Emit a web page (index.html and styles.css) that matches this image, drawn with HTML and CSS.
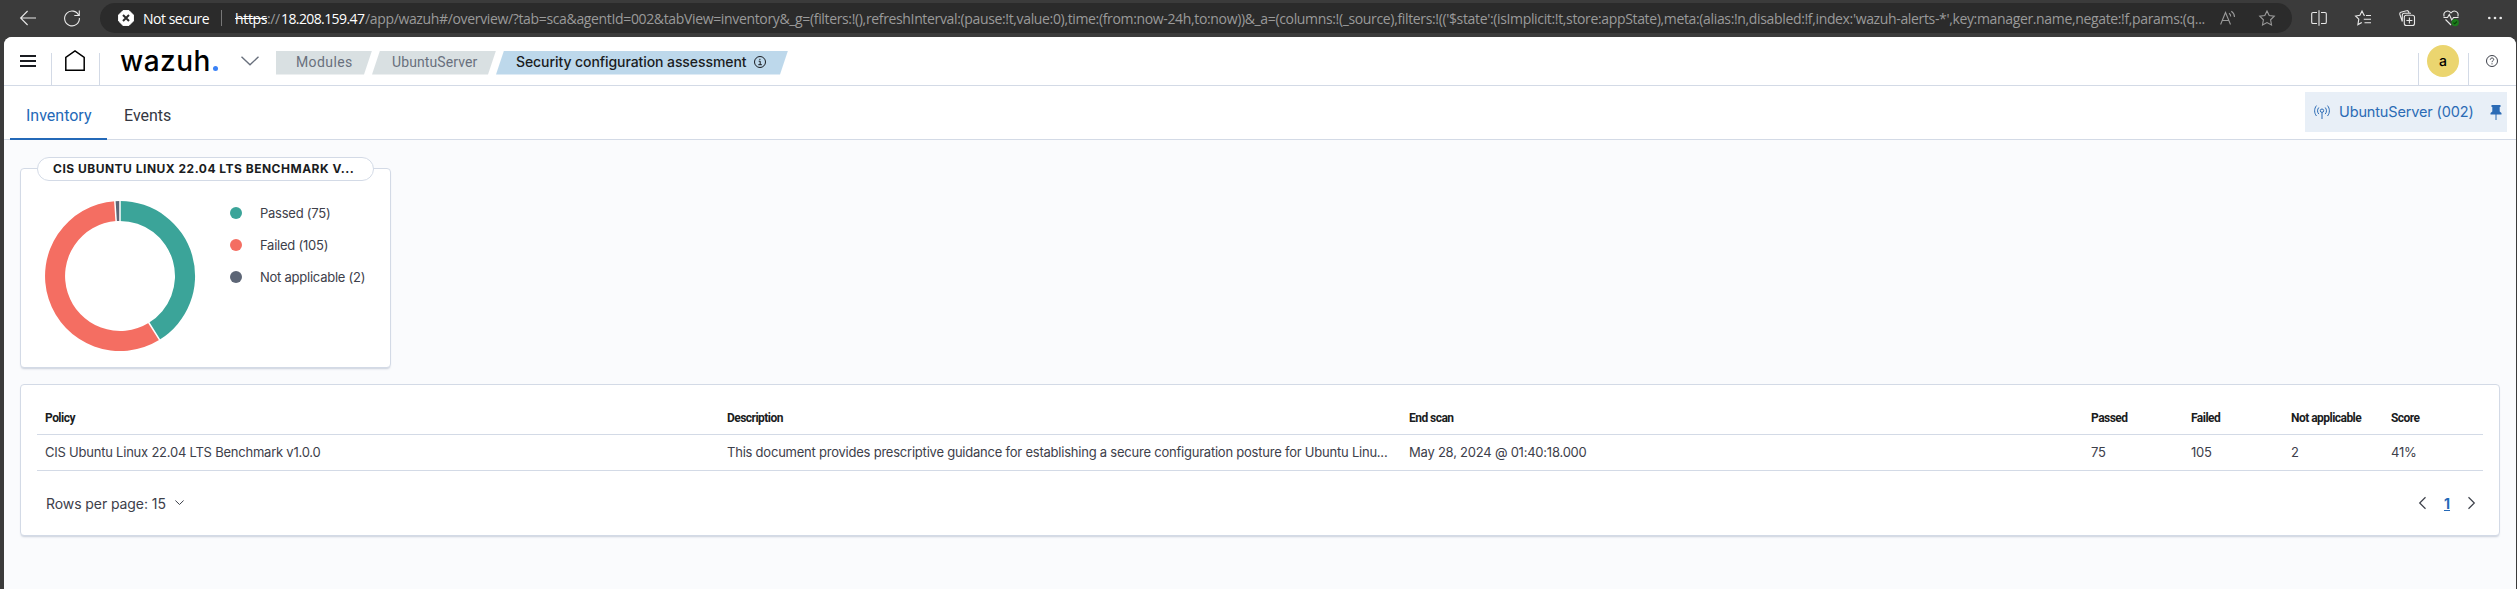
FILE: index.html
```html
<!DOCTYPE html>
<html lang="en">
<head>
<meta charset="utf-8">
<title>Wazuh</title>
<link rel="stylesheet" href="styles.css">
</head>
<body>
<div class="browser">
  <svg class="b-icon back" viewBox="0 0 16 16"><path d="M16 8H.8M7.600 1L.6 8l7 7"/></svg>
  <svg class="b-icon reload" viewBox="0 0 16 16"><path d="M14.800 5.500A7.400 7.400 0 1 0 15.400 8M15.300 .5v5h-5"/></svg>
  <div class="address">
    <svg class="warn" viewBox="0 0 16 16"><path class="warn-bg" d="M5 .6h6L15.400 5v6L11 15.400H5L.6 11V5z"/><path class="warn-x" d="M5 5l6 6M11 5l-6 6"/></svg>
    <span class="not-secure">Not secure</span>
    <span class="sep"></span>
    <span class="url"><span class="scheme">https</span><span class="slashes">://</span><span class="host">18.208.159.47</span><span class="path">/app/wazuh#/overview/?tab=sca&amp;agentId=002&amp;tabView=inventory&amp;_g=(filters:!(),refreshInterval:(pause:!t,value:0),time:(from:now-24h,to:now))&amp;_a=(columns:!(_source),filters:!(('$state':(isImplicit:!t,store:appState),meta:(alias:!n,disabled:!f,index:'wazuh-alerts-*',key:manager.name,negate:!f,params:(q...</span></span>
    <svg class="b-icon read" viewBox="0 0 16 16"><path d="M.6 14.500L5.500 2.500l5 12M2.300 10.500h6.500M9 3.200c1.300.8 1.700 2 1.700 3.300M11.300 1.300c2 1.300 3.200 3.200 3.200 5.700"/></svg>
    <svg class="b-icon star" viewBox="0 0 16 16"><path d="M8 .9l2.200 4.600 5.100.7-3.700 3.600.9 5.100L8 12.500l-4.500 2.400.9-5.100L.7 6.200l5.100-.7z"/></svg>
  </div>
  <svg class="b-icon split" viewBox="0 0 16 16"><path d="M6 2.500H2A1.300 1.300 0 0 0 .7 3.800v8.400A1.300 1.300 0 0 0 2 13.500h4M10 2.500h4a1.300 1.300 0 0 1 1.300 1.300v8.400a1.300 1.300 0 0 1-1.300 1.300h-4M8 .3v15.500"/></svg>
  <svg class="b-icon fav" viewBox="0 0 16 16"><path d="M10 5.300H9L7 1 4.900 5.300l-4.300.7 3.200 3.100-.9 5.500 3.900-2.200M11 5.500h5M8.800 9.200H16M9.500 12.800H16"/></svg>
  <svg class="b-icon coll" viewBox="0 0 16 16"><rect x="5.300" y="5.300" width="10.200" height="10.200" rx="2"/><path d="M10.400 7.500v6M7.400 10.500h6M3.300 11.500L.8 4.300A1.700 1.700 0 0 1 1.900 2.200L7.500.7a1.700 1.700 0 0 1 2.100 1.100l.5 1.300M3.300 11.500V5.300a2 2 0 0 1 2-2H12"/></svg>
  <svg class="b-icon heart" viewBox="0 0 16 16"><path d="M1.200 6.500C-.3 2.500 4.500-1.200 8 2.800c3.500-4 8.300-.3 6.800 3.700M.5 7.500h4L6.300 4.500l2.500 5.500 1.700-2.500h5M2.500 9.500L8 15"/><circle class="ok" cx="12.200" cy="12.600" r="3.700"/><path class="ok-tick" d="M10.500 12.600l1.200 1.200 2.200-2.300"/></svg>
  <svg class="b-icon dots" viewBox="0 0 16 16"><circle cx="2.300" cy="8" r="1.300"/><circle cx="8" cy="8" r="1.300"/><circle cx="13.700" cy="8" r="1.300"/></svg>
</div>

<div class="page">
  <header class="header">
    <div class="cell menu"><svg viewBox="0 0 16 12"><path d="M0 1h16M0 6h16M0 11h16"/></svg></div>
    <div class="cell home"><svg viewBox="0 0 20 22"><path d="M.8 20.200V7.400L10 .9l9.200 6.500v12.800z"/></svg></div>
    <div class="logo">wazuh<i class="logo-dot"></i></div>
    <svg class="chevron" viewBox="0 0 18 10"><path d="M.5 .8L9 8.800l8.500-8"/></svg>
    <nav class="crumbs">
      <a class="crumb first">Modules</a>
      <a class="crumb second">UbuntuServer</a>
      <a class="crumb current"><span>Security configuration assessment</span><svg viewBox="0 0 12 12"><circle cx="6" cy="6" r="5.500"/><path d="M4.700 5.200H6.200V8.700M4.300 8.700h3.600M5.900 2.800v1.200"/></svg></a>
    </nav>
    <div class="avatar-cell"><div class="avatar">a</div></div>
    <svg class="help" viewBox="0 0 12 12"><circle cx="6" cy="6" r="5.500"/><path d="M4.300 4.700c0-2.200 3.400-2.200 3.400-.2C7.700 5.800 6 5.700 6 7.200M6 8.300v1.100"/></svg>
  </header>

  <div class="tabs">
    <a class="tab active">Inventory</a>
    <a class="tab">Events</a>
    <div class="agent">
      <svg class="antenna" viewBox="0 0 16 14"><path d="M2.500 .6C0 3.600 0 8 2.500 11M4.800 2.500c-1.700 2-1.700 4.600 0 6.600M13.500 .6c2.500 3 2.500 7.400 0 10.400M11.200 2.500c1.700 2 1.700 4.600 0 6.600M8 7.500V14"/><circle cx="8" cy="5.700" r="1.700"/></svg>
      <span class="agent-name">UbuntuServer (002)</span>
      <svg class="pin" viewBox="0 0 12 15"><path d="M1.500 0h9v2H9.700v4.500L11.500 8v1.500h-5V15h-1V9.500h-5V8l1.800-1.500V2H1.500z"/></svg>
    </div>
  </div>

  <main class="content">
    <section class="panel policy">
      <div class="pill">CIS UBUNTU LINUX 22.04 LTS BENCHMARK V...</div>
      <div class="policy-body">
        <svg class="donut" viewBox="-75 -75 150 150">
          <path fill="#3ba499" d="M0-75A75 75 0 0 1 39.500 63.800L28.900 46.800A55 55 0 0 0 0-55z"/>
          <path fill="#f46e62" d="M39.500 63.800A75 75 0 1 1-5.200-74.800L-3.800-54.900A55 55 0 1 0 28.900 46.800z"/>
          <path fill="#5d6676" d="M-5.200-74.800A75 75 0 0 1 0-75V-55A55 55 0 0 0-3.800-54.900z"/>
          <path class="gap" d="M0-76V-54M-5.200-75.800L-3.800-54M40.100 64.700L28.400 46"/>
        </svg>
        <ul class="legend">
          <li><i class="dot passed"></i><span>Passed (75)</span></li>
          <li><i class="dot failed"></i><span>Failed (105)</span></li>
          <li><i class="dot na"></i><span>Not applicable (2)</span></li>
        </ul>
      </div>
    </section>

    <section class="panel results">
      <div class="row head">
        <span>Policy</span><span>Description</span><span>End scan</span><span>Passed</span><span>Failed</span><span>Not applicable</span><span>Score</span>
      </div>
      <div class="row data">
        <span>CIS Ubuntu Linux 22.04 LTS Benchmark v1.0.0</span><span>This document provides prescriptive guidance for establishing a secure configuration posture for Ubuntu Linu...</span><span>May 28, 2024 @ 01:40:18.000</span><span>75</span><span>105</span><span>2</span><span>41%</span>
      </div>
      <div class="pager">
        <span class="per-page">Rows per page: 15</span>
        <svg class="caret" viewBox="0 0 9 6"><path d="M.4 .5L4.500 4.500l4.100-4"/></svg>
        <svg class="arrow prev" viewBox="0 0 7 12"><path d="M6.500 .3L.7 6l5.800 5.700"/></svg>
        <b class="num">1</b>
        <svg class="arrow" viewBox="0 0 7 12"><path d="M.5 .3L6.300 6 .5 11.700"/></svg>
      </div>
    </section>
  </main>
</div>
</body>
</html>
```
FILE: styles.css
```css
* { box-sizing: border-box; }
body { margin: 0; width: 2517px; height: 589px; overflow: hidden; background: #3b3b3b; font-family: Inter, "Liberation Sans", sans-serif; color: #3d404a; }
svg { display: block; flex: none; fill: none; stroke: currentColor; overflow: visible; }
span { white-space: nowrap; }

.browser { display: flex; align-items: center; height: 37px; padding: 0 13px 1px 20px; color: #e8e8e8; font-family: "Open Sans", "Noto Sans", sans-serif; font-size: 14px; }
.b-icon { width: 16px; height: 16px; stroke-width: 1.1; }
.back { margin-right: 28px; }
.reload { margin-right: 20px; }
.address { display: flex; flex: none; align-items: center; width: 2192px; height: 30px; padding-left: 18px; border-radius: 15px; background: #2b2b2b; color: #9a9a9a; }
.warn { width: 16px; height: 16px; margin-right: 9px; }
.warn-bg { fill: #fff; stroke: #fff; stroke-linejoin: round; }
.warn-x { stroke: #2b2b2b; stroke-width: 2; }
.not-secure { flex: none; width: 78px; color: #fff; letter-spacing: -.48px; }
.sep { width: 1px; height: 16px; margin-right: 13px; background: #777; }
.url { display: flex; flex: none; width: 1985px; letter-spacing: -.348px; }
.scheme { width: 32px; color: #fff; text-decoration: line-through; }
.slashes { width: 14px; }
.host { width: 84px; color: #fff; letter-spacing: -.6px; }
.star { margin-left: 23px; }
.split { margin-left: 19px; }
.fav, .coll, .heart, .dots { margin-left: 28px; }
.dots circle { fill: #e8e8e8; stroke: none; }
.ok { fill: #1b7a1b; stroke: none; }
.ok-tick { stroke: #0a3d0a; }

.page { width: 2512px; height: 552px; margin-left: 4px; border-radius: 8px 8px 0 0; background: #fafbfd; overflow: hidden; }
.header { display: flex; align-items: center; height: 49px; background: #fff; border-bottom: 1px solid #d3dae6; }
.cell { display: flex; align-items: center; height: 32px; align-self: flex-end; border-right: 1px solid #d3dae6; }
.menu { width: 48px; padding: 0 0 16px 16px; color: #1a1c21; }
.menu svg { width: 16px; height: 12px; stroke-width: 2; }
.home { width: 48px; padding: 0 0 16px 13px; color: #000; }
.home svg { width: 20px; height: 22px; stroke-width: 1.5; }
.logo { display: flex; align-items: baseline; width: 141px; padding-left: 20px; font-size: 28px; font-weight: 500; letter-spacing: .5px; color: #000; line-height: 34px; }
.logo-dot { width: 5px; height: 5px; margin-left: 2px; border-radius: 50%; background: #3b82f6; }
.chevron { width: 18px; height: 10px; stroke-width: 1.4; color: #69707d; }
.crumbs { display: flex; margin: 3px 0 0 17px; font-size: 14px; line-height: 24px; color: #69707d; }
.crumb { display: flex; align-items: center; height: 24px; padding-bottom: 1px; background: #d9e0e2; font-family: Roboto, sans-serif; letter-spacing: .1px; }
.first { width: 96px; padding-left: 20px; letter-spacing: .4px; clip-path: polygon(0 0, 100% 0, calc(100% - 8px) 100%, 0 100%); }
.second { width: 124px; padding-left: 20px; clip-path: polygon(8px 0, 100% 0, calc(100% - 8px) 100%, 0 100%); }
.current { width: 292px; padding-left: 20px; background: #bdd8eb; color: #1a1c21; font-family: Inter, sans-serif; font-weight: 500; letter-spacing: -.08px; clip-path: polygon(8px 0, 100% 0, calc(100% - 8px) 100%, 0 100%); }
.current svg { width: 12px; height: 12px; margin-left: 8px; }
.avatar-cell { display: flex; align-self: flex-end; height: 32px; width: 51px; margin-left: auto; padding-left: 8px; border: solid #d3dae6; border-width: 0 1px; }
.avatar { width: 32px; height: 32px; margin-top: -8px; border-radius: 50%; background: #ebd56f; color: #000; font-size: 14px; font-weight: 500; line-height: 32px; text-align: center; }
.help { width: 12px; height: 12px; margin: 0 18px 0 17px; }

.tabs { display: flex; height: 54px; padding: 0 9px 0 6px; background: #fff; border-bottom: 1px solid #d3dae6; font-family: Roboto, sans-serif; font-size: 16px; line-height: 24px; }
.tab { height: 54px; padding: 18px 17px 0; color: #343741; }
.active { width: 97px; padding-left: 16px; color: #2469b8; border-bottom: 2px solid #2469b8; }
.agent { display: flex; align-items: center; width: 202px; height: 40px; margin: 6px 0 0 auto; padding-left: 9px; background: #e8eff7; color: #2b6bb5; }
.antenna { width: 16px; height: 14px; }
.agent-name { flex: none; width: 151px; margin-left: 9px; font-family: Inter, sans-serif; font-size: 14.5px; letter-spacing: -.14px; }
.pin { width: 12px; height: 15px; fill: #2b6bb5; stroke: none; }

.content { padding: 28px 16px; }
.panel { background: #fff; border: 1px solid #d3dae6; border-radius: 4px; box-shadow: 0 2px 2px -1px rgba(90, 105, 140, .3); }
.policy { width: 371px; height: 200px; }
.pill { width: 337px; height: 24px; margin: -12px 0 0 16px; padding-left: 15px; border: 1px solid #d3dae6; border-radius: 12px; background: #fff; font-size: 12px; font-weight: 700; line-height: 22px; letter-spacing: .5px; white-space: nowrap; color: #1a1c21; }
.policy-body { display: flex; }
.donut { width: 150px; height: 150px; margin: 20px 0 0 24px; stroke: none; }
.donut .gap { stroke: #fff; stroke-width: 1.5; }
.legend { margin: 20px 0 0 35px; padding: 0; list-style: none; font-size: 13px; letter-spacing: -.24px; }
.legend li { display: flex; align-items: center; height: 24px; margin-bottom: 8px; }
.legend span { padding-bottom: 1px; }
.dot { width: 12px; height: 12px; margin-right: 18px; border-radius: 50%; }
.passed { background: #3ba499; }
.failed { background: #f46e62; }
.na { background: #5d6676; }

.results { height: 152px; margin-top: 16px; padding: 16px; }
.row { display: grid; grid-template-columns: 682px 682px 682px 100px 100px 100px 1fr; align-items: center; height: 36px; padding-left: 8px; border-bottom: 1px solid #d3dae6; font-size: 13px; letter-spacing: -.225px; }
.data { padding-bottom: 1px; }
.head { height: 34px; font-family: Roboto, sans-serif; font-size: 12px; font-weight: 700; letter-spacing: -.53px; color: #1a1c21; }
.pager { display: flex; align-items: center; height: 32px; margin-top: 16px; padding: 0 8px 0 9px; font-size: 14px; }
.per-page { width: 129px; letter-spacing: -.08px; }
.caret { width: 9px; height: 6px; }
.arrow { width: 7px; height: 12px; stroke-width: 1.2; }
.prev { margin-left: auto; }
.num { width: 42px; text-align: center; color: #2469b8; text-decoration: underline; }
```
